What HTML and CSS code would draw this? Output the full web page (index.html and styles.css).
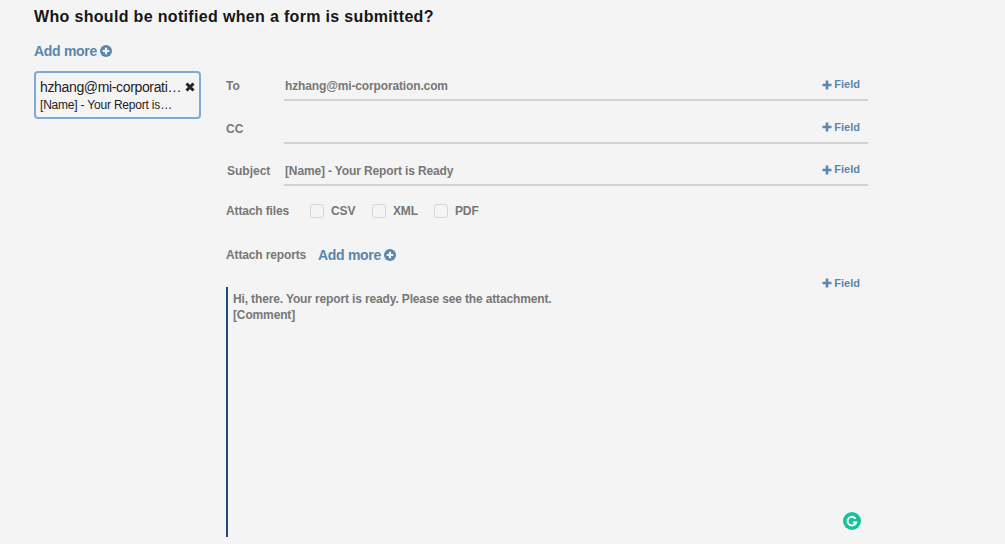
FILE: index.html
```html
<!DOCTYPE html>
<html lang="en">
<head>
<meta charset="UTF-8">
<meta name="viewport" content="width=device-width, initial-scale=1.0">
<title>Form notifications</title>
<link rel="stylesheet" href="styles.css">
</head>
<body>
    <main class="page">
        <h1>Who should be notified when a form is submitted?</h1>
        <a class="add-more" href="#">Add more
            <svg class="icon-add" viewBox="0 0 12 12"><circle cx="6" cy="6" r="6" fill="#5b86ad"/><path d="M6 2.7v6.6M2.7 6h6.6" stroke="#f4f4f4" stroke-width="2.2"/></svg>
        </a>
        <div class="columns">
            <aside class="list">
                <div class="card">
                    <div class="card-top">
                        <span class="card-mail">hzhang@mi-corporation.com</span>
                        <svg class="icon-remove" viewBox="0 0 10 10"><path d="M1.5 1.5l7 7M8.5 1.5l-7 7" stroke="#222" stroke-width="3"/></svg>
                    </div>
                    <div class="card-subject">[Name] - Your Report is Ready</div>
                </div>
            </aside>
            <section class="detail">
                <div class="row">
                    <label class="row-label">To</label>
                    <div class="input">
                        <span>hzhang@mi-corporation.com</span>
                        <a class="field-btn" href="#"><svg class="icon-plus" viewBox="0 0 10 10"><path d="M5 .5v9M.5 5h9" stroke="#5b86ad" stroke-width="2.6"/></svg>Field</a>
                    </div>
                </div>
                <div class="row">
                    <label class="row-label">CC</label>
                    <div class="input">
                        <span></span>
                        <a class="field-btn" href="#"><svg class="icon-plus" viewBox="0 0 10 10"><path d="M5 .5v9M.5 5h9" stroke="#5b86ad" stroke-width="2.6"/></svg>Field</a>
                    </div>
                </div>
                <div class="row">
                    <label class="row-label subject">Subject</label>
                    <div class="input">
                        <span>[Name] - Your Report is Ready</span>
                        <a class="field-btn" href="#"><svg class="icon-plus" viewBox="0 0 10 10"><path d="M5 .5v9M.5 5h9" stroke="#5b86ad" stroke-width="2.6"/></svg>Field</a>
                    </div>
                </div>
                <div class="files">
                    <span class="files-label">Attach files</span>
                    <label class="check"><span class="box"></span>CSV</label>
                    <label class="check"><span class="box"></span>XML</label>
                    <label class="check"><span class="box"></span>PDF</label>
                </div>
                <div class="reports">
                    <span class="reports-label">Attach reports</span>
                    <a class="add-more" href="#">Add more
                        <svg class="icon-add" viewBox="0 0 12 12"><circle cx="6" cy="6" r="6" fill="#5b86ad"/><path d="M6 2.7v6.6M2.7 6h6.6" stroke="#f4f4f4" stroke-width="2.2"/></svg>
                    </a>
                </div>
                <div class="body-wrap">
                    <a class="field-btn body-field" href="#"><svg class="icon-plus" viewBox="0 0 10 10"><path d="M5 .5v9M.5 5h9" stroke="#5b86ad" stroke-width="2.6"/></svg>Field</a>
                    <div class="body-text">
                        <div>Hi, there. Your report is ready. Please see the attachment.</div>
                        <div>[Comment]</div>
                    </div>
                    <svg class="grammarly" viewBox="0 0 18 18"><circle cx="9" cy="9" r="9" fill="#15c39a"/><path d="M12.6 6.6A4.4 4.4 0 1 0 13.2 10.4H9.8" fill="none" stroke="#fff" stroke-width="1.9"/></svg>
                </div>
            </section>
        </div>
    </main>
</body>
</html>
```

FILE: styles.css
```css
html,body{
    height:100%;
}
body{
    font-family:"Liberation Sans",Arial,sans-serif;
    margin:0;
    background:#f4f4f4;
    overflow:hidden;
}
.page{
    padding:8px 0 0 34px;
}
h1{
    margin:0 0 16px;
    font-size:16px;
    line-height:18px;
    font-weight:bold;
    letter-spacing:.33px;
    color:#161616;
}
.add-more{
    display:inline-flex;
    align-items:center;
    gap:3px;
    height:16px;
    font-size:14px;
    font-weight:bold;
    letter-spacing:-.3px;
    color:#5b86ad;
    text-decoration:none;
}
.icon-add{
    width:12px;
    height:12px;
}
.columns{
    display:flex;
    margin-top:11px;
}
.list{
    width:167px;
    margin-right:25px;
}
.card{
    box-sizing:border-box;
    height:48px;
    padding:6px 4px 0 4px;
    border:2px solid #7dabd6;
    border-radius:4px;
}
.card-top{
    display:flex;
    align-items:center;
    justify-content:space-between;
    height:16px;
}
.card-mail{
    width:144px;
    overflow:hidden;
    white-space:nowrap;
    text-overflow:ellipsis;
    font-size:14px;
    letter-spacing:-.35px;
    color:#222;
}
.icon-remove{
    width:10px;
    height:10px;
}
.card-subject{
    width:135px;
    margin-top:3px;
    overflow:hidden;
    white-space:nowrap;
    text-overflow:ellipsis;
    font-size:12px;
    line-height:14px;
    letter-spacing:-.2px;
    color:#222;
}
.detail{
    width:642px;
}
.row{
    display:flex;
    height:30px;
    margin-bottom:12.5px;
}
.row-label{
    width:58px;
    padding-top:8px;
    font-size:12px;
    line-height:15px;
    font-weight:bold;
    color:#777;
}
.subject{
    padding-left:1px;
    width:57px;
}
.input{
    flex:1;
    display:flex;
    justify-content:space-between;
    box-sizing:border-box;
    height:30px;
    padding:8px 8px 0 1px;
    border-bottom:2px solid #d2d2d2;
    font-size:12px;
    line-height:15px;
    font-weight:bold;
    letter-spacing:-.14px;
    color:#777;
}
.field-btn{
    display:inline-flex;
    align-items:center;
    gap:2px;
    height:13px;
    margin-top:-1px;
    font-size:11px;
    font-weight:bold;
    letter-spacing:0;
    color:#5b86ad;
    text-decoration:none;
}
.icon-plus{
    width:10px;
    height:10px;
}
.files{
    display:flex;
    align-items:center;
    height:16px;
    margin-top:16.5px;
    font-size:12px;
    font-weight:bold;
    letter-spacing:-.14px;
    color:#777;
}
.files-label{
    width:84px;
}
.check{
    display:flex;
    align-items:center;
    gap:7px;
    width:62px;
}
.box{
    box-sizing:border-box;
    width:14px;
    height:14px;
    border:1px solid #d6d6d6;
    border-radius:3px;
}
.reports{
    display:flex;
    align-items:center;
    height:16px;
    margin-top:28px;
    font-size:12px;
    font-weight:bold;
    letter-spacing:-.14px;
    color:#777;
}
.reports-label{
    width:92px;
}
.body-wrap{
    position:relative;
    margin-top:24px;
    height:250px;
}
.body-field{
    position:absolute;
    top:-9px;
    right:8px;
}
.body-text{
    box-sizing:border-box;
    height:250px;
    padding:4px 0 0 5px;
    border-left:2px solid #1f4a7c;
    font-size:12px;
    line-height:16px;
    font-weight:bold;
    letter-spacing:-.14px;
    color:#777;
}
.grammarly{
    position:absolute;
    left:617px;
    top:225px;
    width:18px;
    height:18px;
}
```
